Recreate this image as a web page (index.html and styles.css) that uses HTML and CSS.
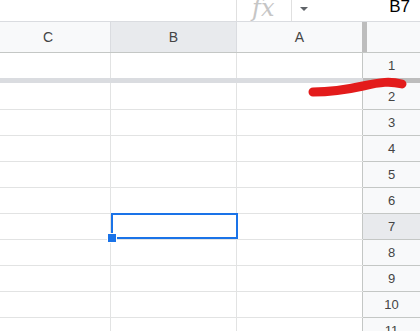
FILE: index.html
```html
<!DOCTYPE html>
<html lang="en">
<head>
    <meta charset="UTF-8">
    <title>Sheet</title>
    <link rel="stylesheet" href="styles.css">
</head>
<body>

    <div class="sheet">
        <div class="topbar">
            <div class="formula"></div>
            <div class="fx">fx</div>
            <div class="namebox">
                <span class="caret"></span>
                <span class="ref">B7</span>
            </div>
        </div>

        <div class="colheads">
            <div class="colhead col-c">C</div>
            <div class="colhead col-b active">B</div>
            <div class="colhead col-a">A</div>
            <div class="freeze-handle"></div>
            <div class="corner"></div>
        </div>

        <div class="row first">
            <div class="cell col-c"></div>
            <div class="cell col-b"></div>
            <div class="cell col-a"></div>
            <div class="rowhead">1</div>
        </div>

        <div class="freeze-bar">
            <div class="bar-cells"></div>
            <div class="bar-head"></div>
        </div>

        <div class="row second">
            <div class="cell col-c"></div>
            <div class="cell col-b"></div>
            <div class="cell col-a"></div>
            <div class="rowhead">2</div>
        </div>
        <div class="row">
            <div class="cell col-c"></div>
            <div class="cell col-b"></div>
            <div class="cell col-a"></div>
            <div class="rowhead">3</div>
        </div>
        <div class="row">
            <div class="cell col-c"></div>
            <div class="cell col-b"></div>
            <div class="cell col-a"></div>
            <div class="rowhead">4</div>
        </div>
        <div class="row">
            <div class="cell col-c"></div>
            <div class="cell col-b"></div>
            <div class="cell col-a"></div>
            <div class="rowhead">5</div>
        </div>
        <div class="row">
            <div class="cell col-c"></div>
            <div class="cell col-b"></div>
            <div class="cell col-a"></div>
            <div class="rowhead">6</div>
        </div>
        <div class="row">
            <div class="cell col-c"></div>
            <div class="cell col-b">
                <div class="selection"></div>
                <div class="fill-handle"></div>
            </div>
            <div class="cell col-a"></div>
            <div class="rowhead active">7</div>
        </div>
        <div class="row">
            <div class="cell col-c"></div>
            <div class="cell col-b"></div>
            <div class="cell col-a"></div>
            <div class="rowhead">8</div>
        </div>
        <div class="row">
            <div class="cell col-c"></div>
            <div class="cell col-b"></div>
            <div class="cell col-a"></div>
            <div class="rowhead">9</div>
        </div>
        <div class="row">
            <div class="cell col-c"></div>
            <div class="cell col-b"></div>
            <div class="cell col-a"></div>
            <div class="rowhead">10</div>
        </div>
        <div class="row">
            <div class="cell col-c"></div>
            <div class="cell col-b"></div>
            <div class="cell col-a"></div>
            <div class="rowhead">11</div>
        </div>

        <!-- hand drawn mark over the frozen row line -->
        <svg class="scribble" width="420" height="331" viewBox="0 0 420 331">
            <path d="M313 92 C 328 92, 345 90, 363 86 S 390 81, 402 84" fill="none" stroke="#e31b1b" stroke-width="9" stroke-linecap="round"/>
        </svg>
    </div>

</body>
</html>
```

FILE: styles.css
```css
* {
    box-sizing: border-box;
}
body {
    margin: 0;
    background: #fff;
    font-family: "Liberation Sans", Arial, sans-serif;
    overflow: hidden;
}
.sheet {
    position: relative;
    width: 420px;
    height: 331px;
    overflow: hidden;
}
.topbar {
    display: flex;
    height: 22px;
    border-bottom: 1px solid #dadce0;
}
.formula {
    width: 236px;
}
.fx {
    width: 56px;
    border-left: 1px solid #e0e0e0;
    border-right: 1px solid #e0e0e0;
    font-family: "DejaVu Serif", serif;
    font-style: italic;
    font-size: 24px;
    line-height: 16px;
    color: #c6c6c6;
    padding-left: 15px;
    overflow: hidden;
}
.namebox {
    flex: 1;
    display: flex;
    align-items: flex-start;
    justify-content: space-between;
    padding: 0 10px 0 8px;
}
.caret {
    margin-top: 7px;
    width: 0;
    height: 0;
    border-left: 4px solid transparent;
    border-right: 4px solid transparent;
    border-top: 4px solid #5f6368;
}
.ref {
    font-size: 17px;
    line-height: 17px;
    margin-top: -2px;
    color: #000;
}
.colheads {
    display: flex;
    height: 31px;
    background: #f8f9fa;
    border-bottom: 1px solid #c4c7c5;
}
.colhead {
    display: flex;
    align-items: center;
    justify-content: center;
    font-size: 14px;
    color: #444;
    border-right: 1px solid #dadce0;
}
.colhead.col-c {
    width: 111px;
    padding-right: 14px;
}
.colhead.col-b {
    width: 126px;
}
.colhead.col-a {
    width: 125px;
    border-right: none;
}
.colhead.active {
    background: #e8eaed;
}
.freeze-handle {
    width: 5px;
    background: #bdbdbd;
}
.corner {
    flex: 1;
}
.row {
    display: flex;
    height: 26px;
    border-bottom: 1px solid #e2e3e3;
}
.row.first {
    height: 25px;
    border-bottom: none;
}
.row.second {
    height: 27px;
}
.cell {
    border-right: 1px solid #e2e3e3;
}
.cell.col-c {
    width: 111px;
}
.cell.col-b {
    width: 126px;
    position: relative;
}
.cell.col-a {
    width: 126px;
    border-right-color: #c4c7c5;
}
.rowhead {
    flex: 1;
    display: flex;
    align-items: center;
    justify-content: center;
    background: #f8f9fa;
    font-size: 13px;
    color: #444;
    margin-bottom: -1px;
    border-bottom: 1px solid #c4c7c5;
}
.rowhead.active {
    background: #e8eaed;
}
.freeze-bar {
    display: flex;
    height: 5px;
}
.bar-cells {
    width: 363px;
    background: #dadce0;
}
.bar-head {
    flex: 1;
    background: #bdbdbd;
}
.selection {
    position: absolute;
    left: 0;
    top: -1px;
    width: 127px;
    height: 26px;
    border: 2px solid #1a73e8;
}
.fill-handle {
    position: absolute;
    left: -4px;
    top: 19px;
    width: 10px;
    height: 10px;
    background: #1a73e8;
    border: 1px solid #fff;
}
.scribble {
    position: absolute;
    left: 0;
    top: 0;
    pointer-events: none;
}
```
